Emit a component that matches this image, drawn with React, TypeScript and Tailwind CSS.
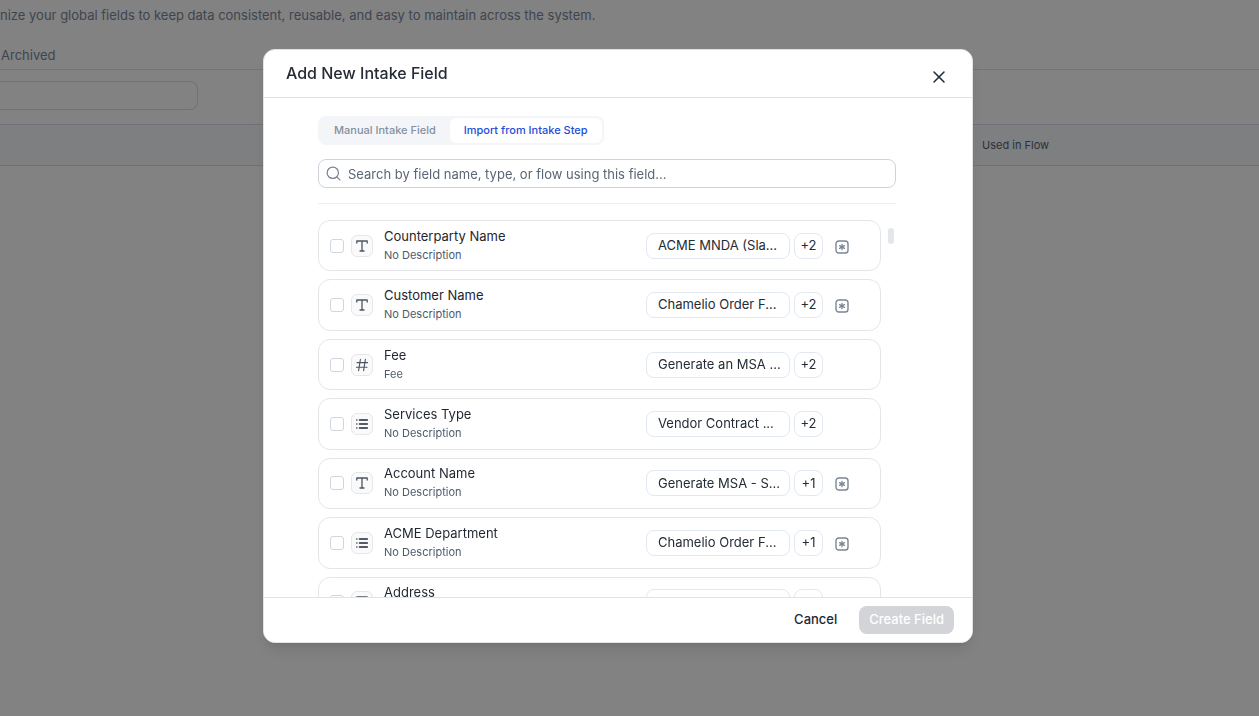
import { useState } from "react";
import { X, Search } from "lucide-react";

type Kind = "text" | "number" | "list";
type Field = { name: string; description: string; kind: Kind; flow: string; more: string; required: boolean };

const fields: Field[] = [
  { name: "Counterparty Name", description: "No Description", kind: "text", flow: "ACME MNDA (Sla...", more: "+2", required: true },
  { name: "Customer Name", description: "No Description", kind: "text", flow: "Chamelio Order F...", more: "+2", required: true },
  { name: "Fee", description: "Fee", kind: "number", flow: "Generate an MSA ...", more: "+2", required: false },
  { name: "Services Type", description: "No Description", kind: "list", flow: "Vendor Contract ...", more: "+2", required: false },
  { name: "Account Name", description: "No Description", kind: "text", flow: "Generate MSA - S...", more: "+1", required: true },
  { name: "ACME Department", description: "No Description", kind: "list", flow: "Chamelio Order F...", more: "+1", required: true },
  { name: "Address", description: "No Description", kind: "text", flow: "DO7D - Sales (a...", more: "+1", required: false },
];

function KindIcon({ kind }: { kind: Kind }) {
  if (kind === "number") {
    return (
      <svg viewBox="0 0 14 14" className="size-3.5" fill="none" stroke="#4b5563" strokeWidth="1.1" strokeLinecap="round" aria-hidden="true">
        <path d="M5.4 1.4 3.6 12.6M10.4 1.4 8.6 12.6M2 4.6h10.6M1.4 9.2H12" />
      </svg>
    );
  }
  if (kind === "list") {
    return (
      <svg viewBox="0 0 14 14" className="size-3.5" fill="none" stroke="#1f2937" strokeWidth="1.3" strokeLinecap="round" aria-hidden="true">
        <path d="M4.4 3h8M4.4 7h8M4.4 11h8M1.8 3h.1M1.8 7h.1M1.8 11h.1" />
      </svg>
    );
  }
  return (
    <svg viewBox="0 0 14 14" className="size-3.5" fill="none" stroke="#4b5563" strokeWidth="1.3" strokeLinecap="round" strokeLinejoin="round" aria-hidden="true">
      <path d="M1.8 4V2h10.4v2M7 2v10M5 12h4" />
    </svg>
  );
}

function RequiredIcon() {
  return (
    <svg viewBox="0 0 14 14" className="size-3.5" fill="none" stroke="#7b8794" strokeLinecap="round" role="img" aria-label="Required">
      <rect x="1" y="1" width="12" height="12" rx="2.8" strokeWidth="1.4" />
      <path d="M7 4.3v5.4M4.6 5.6l4.8 2.8M4.6 8.4l4.8-2.8" strokeWidth="1.3" />
    </svg>
  );
}

function FieldRow({ field }: { field: Field }) {
  return (
    <li className="flex items-center rounded-xl border border-[#e3e5e8] bg-white pr-[31px] pl-[11px]">
      <label className="flex min-w-0 flex-1 items-center">
        <input type="checkbox" className="size-3.5 shrink-0 appearance-none rounded-[3px] border border-[#cfd6e0] bg-white checked:bg-blue-700" />
        <span className="ml-[7px] flex size-[22px] shrink-0 items-center justify-center rounded-md border border-[#e6e7e9] bg-[#fafafa]">
          <KindIcon kind={field.kind} />
        </span>
        <span className="ml-[11px] flex min-w-0 flex-col pb-0.5">
          <span className="truncate text-[13px] leading-5 text-[#1f2630]">{field.name}</span>
          <span className="truncate text-[11px] leading-[18px] text-[#4e5a6b]">{field.description}</span>
        </span>
      </label>
      <span className="flex h-[26px] w-36 shrink-0 items-center rounded-lg border border-[#e2e8f2] px-[11px] text-[13px] whitespace-nowrap text-[#252c36]">{field.flow}</span>
      <button type="button" className="ml-1 flex h-[26px] w-[29px] shrink-0 items-center justify-center rounded-lg border border-[#e2e8f2] text-[13px] text-[#252c36]">{field.more}</button>
      <span className="ml-3 flex w-3.5 shrink-0 justify-center pt-0.5">{field.required && <RequiredIcon />}</span>
    </li>
  );
}

function Backdrop() {
  return (
    <div className="min-h-screen bg-white" aria-hidden="true">
      <p className="pt-[5px] text-[13px] leading-5 whitespace-nowrap text-[#7b889c]">
        nize your global fields to keep data consistent, reusable, and easy to maintain across the system.
      </p>
      <div className="mt-5 flex h-[25px] border-b border-[#dfe4ea] pl-px text-[13px] leading-5 text-[#7b889c]">Archived</div>
      <div className="py-[11px]">
        <div className="h-[29px] w-[198px] rounded-r-lg border border-l-0 border-[#dae0e8]" />
      </div>
      <div className="mt-[3px] flex h-[42px] items-center border-y border-[#d8dfe8] bg-[#f8fafc] text-[11px] text-[#56606f]">
        <span className="ml-[78%]">Used in Flow</span>
      </div>
    </div>
  );
}

export default function App() {
  const [tab, setTab] = useState("import");
  return (
    <div className="font-[Inter,sans-serif]">
      <Backdrop />
      <div className="fixed inset-0 flex items-center justify-center bg-black/49 pr-[23px] pb-6">
        <section role="dialog" aria-modal="true" aria-labelledby="dialog-title" className="flex h-[594px] max-h-full w-full max-w-[710px] flex-col overflow-hidden rounded-xl border border-[#e1e3e6] bg-white shadow-lg">
          <header className="flex h-12 shrink-0 items-center justify-between border-b border-[#e1e3e6] pr-[23px] pl-[22px]">
            <h2 id="dialog-title" className="pb-0.5 text-base font-medium text-[#252c36]">Add New Intake Field</h2>
            <button type="button" aria-label="Close" className="pt-[7px] text-[#1f2937]">
              <X className="size-5" strokeWidth={1.8} />
            </button>
          </header>

          <div className="flex min-h-0 flex-1 flex-col overflow-hidden pt-[18px] pr-[76px] pl-[54px]">
            <div role="tablist" className="flex h-[29px] shrink-0 self-start rounded-lg bg-[#f4f5f9] p-0.5 text-[11px] font-medium">
              <button type="button" role="tab" aria-selected={tab === "manual"} onClick={() => setTab("manual")} className="rounded-md px-3.5 text-[#84909f] aria-selected:bg-white aria-selected:text-[#1d4ed8]">Manual Intake Field</button>
              <button type="button" role="tab" aria-selected={tab === "import"} onClick={() => setTab("import")} className="rounded-md px-3.5 text-[#84909f] aria-selected:bg-white aria-selected:text-[#1d4ed8]">Import from Intake Step</button>
            </div>

            <label className="mt-3.5 flex h-[29px] shrink-0 items-center gap-1.5 rounded-lg border border-[#cdd3dc] px-1.5">
              <Search className="size-[17px] shrink-0 text-[#76828f]" strokeWidth={1.7} aria-hidden="true" />
              <input type="text" aria-label="Search fields" placeholder="Search by field name, type, or flow using this field..." className="min-w-0 flex-1 pt-0.5 text-[13px] outline-none placeholder:text-[#5a6675]" />
            </label>

            <hr className="mt-[15px] shrink-0 border-[#eceef0]" />

            <div className="mt-4 flex min-h-0 flex-1 items-start">
              <ul className="grid min-h-[408px] min-w-0 flex-1 auto-rows-fr gap-2">
                {fields.map((field) => (
                  <FieldRow key={field.name} field={field} />
                ))}
              </ul>
              <div className="mt-2 mr-0.5 ml-[7px] h-4 w-1.5 shrink-0 rounded-full bg-[#e3e6ea]" />
            </div>
          </div>

          <footer className="flex h-[45px] shrink-0 items-center justify-end gap-[22px] border-t border-[#e1e3e6] bg-white pr-[18px] text-[13px] font-medium">
            <button type="button" className="text-[#1f2630]">Cancel</button>
            <button type="button" disabled className="h-7 rounded-lg bg-[#d2d4d7] px-2.5 text-white">Create Field</button>
          </footer>
        </section>
      </div>
    </div>
  );
}
